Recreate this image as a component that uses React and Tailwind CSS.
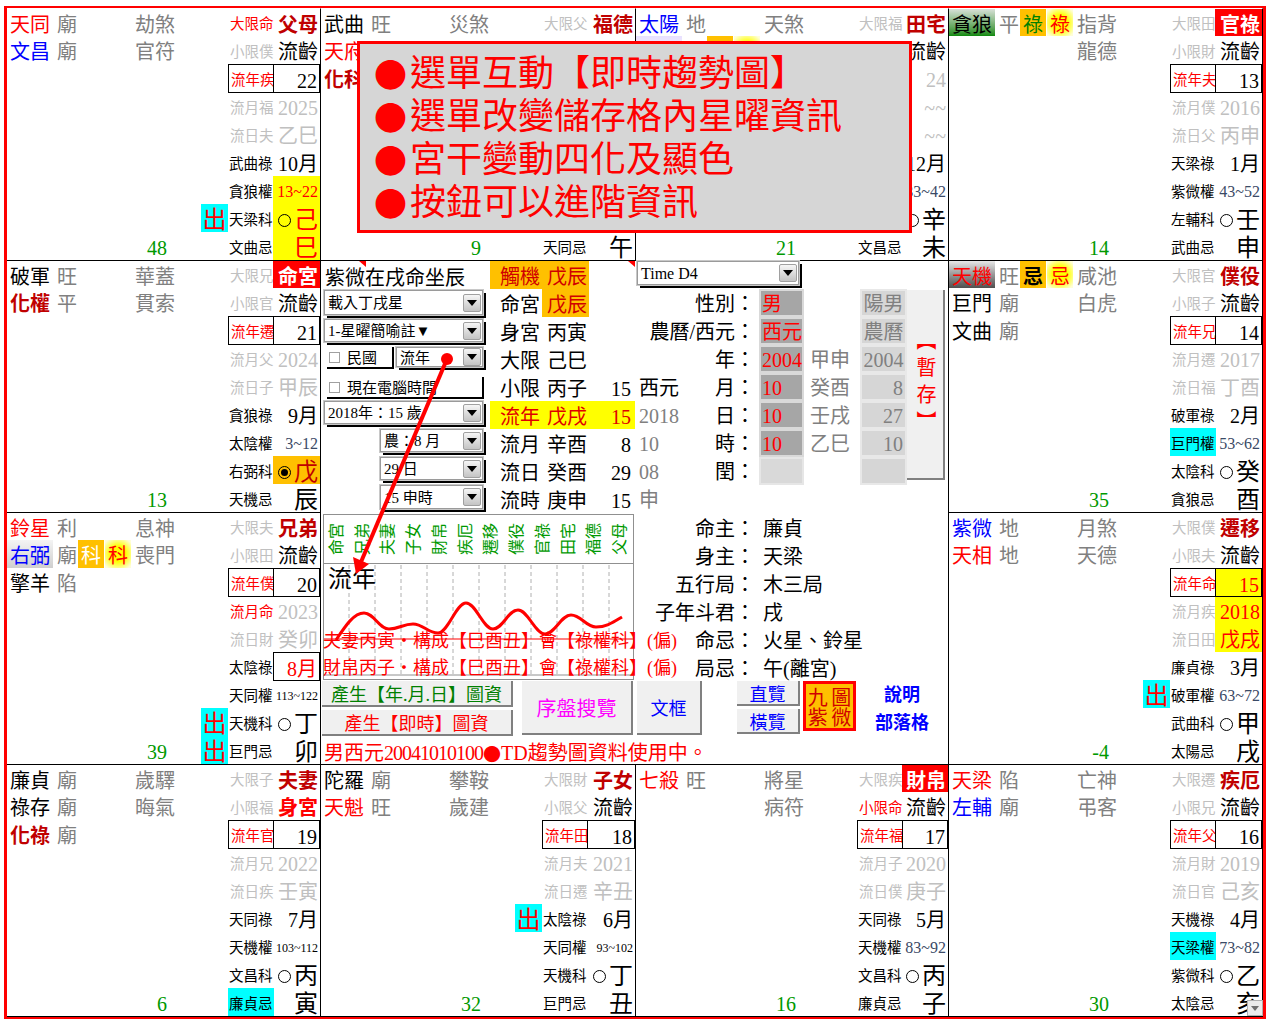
import React from "react";

const RED = "text-[#ff0000]";
const GRAY = "text-[#808080]";
const LIGHT = "text-[#c0c0c0]";
const PAL = "text-[#c00000] font-bold";
const PAL_ON = "text-white font-bold bg-[#ff0000]";
const LIM = "text-[16px] text-[#3a4a66]";
const TINY = "text-[12px] text-black";
const STEM_ON_YELLOW = "text-[24px] text-[#ff0000] bg-[#ffff00]";
const HUA_O = "bg-[#ffc000]";
const HUA_Y = "bg-[radial-gradient(circle,#ffff00_40%,#ffffd8_90%)]";
const CJK = "font-['Noto_Sans_CJK_TC',sans-serif]";

const cells = [
  {
    stars: [
      { n: "天同", c: RED, b: "廟", m: "劫煞" },
      { n: "文昌", c: "text-[#0000ff]", b: "廟", m: "官符" },
    ],
    num: "48", chu: [7],
    da: "大限命", daC: RED, pal: "父母", xiao: "小限僕",
    nian: "流年疾", age: "22", yue: "流月福", yr: "2025", ri: "流日夫", gz: "乙巳",
    lu: "武曲祿", mon: "10月", quan: "貪狼權", lim: "13~22", limC: "text-[16px] text-[#ff0000] bg-[#ffff00]",
    ke: "天梁科", stem: "己", stemC: STEM_ON_YELLOW, ji: "文曲忌", br: "巳", brC: STEM_ON_YELLOW,
  },
  {
    // rows 2-8 of the right side sit under the note box
    stars: [
      { n: "武曲", c: "text-black", b: "旺", m: "災煞" },
      { n: "天府", c: RED },
      { n: "化科", c: PAL },
    ],
    num: "9",
    da: "大限父", pal: "福德", noBox: true, noCircle: true,
    ji: "天同忌", br: "午",
  },
  {
    stars: [
      { n: "太陽", c: "text-[#0000ff]", b: "地", m: "天煞" },
      {
        nb: "bg-gradient-to-b from-[#e8e0ff] to-white",
        h1: { c: HUA_O }, h2: { c: HUA_Y },
      },
    ],
    num: "21",
    da: "大限福", pal: "田宅", xv: "流齡",
    age: "24", noBox: true, ageC: `text-[20px] ${LIGHT}`, yr: "~~", gz: "~~",
    mon: "12月", lim: "33~42",
    stem: "辛", ji: "文昌忌", br: "未",
  },
  {
    stars: [
      {
        n: "貪狼", c: "text-black", nb: "bg-gradient-to-b from-[#d8e0d8] to-[#078a07]", b: "平",
        h1: { t: "祿", c: `text-[#008000] ${HUA_O}` }, h2: { t: "祿", c: `${RED} ${HUA_Y}` }, m: "指背",
      },
      { m: "龍德" },
    ],
    num: "14",
    da: "大限田", pal: "官祿", palC: PAL_ON, xiao: "小限財",
    nian: "流年夫", age: "13", yue: "流月僕", yr: "2016", ri: "流日父", gz: "丙申",
    lu: "天梁祿", mon: "1月", quan: "紫微權", lim: "43~52",
    ke: "左輔科", stem: "壬", ji: "武曲忌", br: "申",
  },
];

const leftMid = {
  stars: [
    { n: "破軍", c: "text-black", b: "旺", m: "華蓋" },
    { n: "化權", c: PAL, b: "平", m: "貫索" },
  ],
  num: "13",
  da: "大限兄", pal: "命宮", palC: PAL_ON, xiao: "小限官",
  nian: "流年遷", age: "21", yue: "流月父", yr: "2024", ri: "流日子", gz: "甲辰",
  lu: "貪狼祿", mon: "9月", quan: "太陰權", lim: "3~12",
  ke: "右弼科", stem: "戊", stemC: "text-[24px] text-[#c00000] bg-[#ffc000]", dot: true, ji: "天機忌", br: "辰",
};

const rightMid = {
  stars: [
    {
      n: "天機", c: RED, nb: "bg-gradient-to-b from-[#e8e8e8] to-[#505050]", b: "旺",
      h1: { t: "忌", c: `text-black font-bold ${HUA_O}` }, h2: { t: "忌", c: `${RED} ${HUA_Y}` }, m: "咸池",
    },
    { n: "巨門", c: "text-black", b: "廟", m: "白虎" },
    { n: "文曲", c: "text-black", b: "廟" },
  ],
  num: "35",
  da: "大限官", pal: "僕役", xiao: "小限子",
  nian: "流年兄", age: "14", yue: "流月遷", yr: "2017", ri: "流日福", gz: "丁酉",
  lu: "破軍祿", mon: "2月", quan: "巨門權", quanC: "text-black bg-[#00ffff]", lim: "53~62",
  ke: "太陰科", stem: "癸", ji: "貪狼忌", br: "酉",
};

const leftLow = {
  stars: [
    { n: "鈴星", c: RED, b: "利", m: "息神" },
    {
      n: "右弼", c: "text-[#0000ff]", nb: "bg-gradient-to-b from-[#f4f4f4] to-[#cfcfcf]", b: "廟",
      h1: { t: "科", c: `text-white ${HUA_O}` }, h2: { t: "科", c: `${RED} ${HUA_Y}` }, m: "喪門",
    },
    { n: "擎羊", c: "text-black", b: "陷" },
  ],
  num: "39", chu: [7, 8],
  da: "大限夫", pal: "兄弟", xiao: "小限田",
  nian: "流年僕", age: "20", yue: "流月命", yueC: RED, yr: "2023", ri: "流日財", gz: "癸卯",
  lu: "太陰祿", mon: "8月", monC: `text-[20px] ${RED}`, monBox: true, quan: "天同權", lim: "113~122", limC: TINY,
  ke: "天機科", stem: "丁", ji: "巨門忌", br: "卯",
};

const rightLow = {
  stars: [
    { n: "紫微", c: "text-[#0000ff]", b: "地", m: "月煞" },
    { n: "天相", c: RED, b: "地", m: "天德" },
  ],
  num: "-4", chu: [6],
  da: "大限僕", pal: "遷移", xiao: "小限夫",
  nian: "流年命", age: "15", ageC: "text-[20px] text-[#ff0000] bg-[#ffff00]",
  yue: "流月疾", yr: "2018", yrC: "text-[20px] text-[#ff0000] bg-[#ffff00]",
  ri: "流日田", gz: "戊戌", gzC: "text-[20px] text-[#ff0000] bg-[#ffff00]",
  lu: "廉貞祿", mon: "3月", quan: "破軍權", lim: "63~72",
  ke: "武曲科", stem: "甲", ji: "太陽忌", br: "戌",
};

const bottom = [
  {
    stars: [
      { n: "廉貞", c: "text-black", b: "廟", m: "歲驛" },
      { n: "祿存", c: "text-black", b: "廟", m: "晦氣" },
      { n: "化祿", c: PAL, b: "廟" },
    ],
    num: "6",
    da: "大限子", pal: "夫妻", xiao: "小限福", xv: "身宮", xvC: "text-[20px] text-[#ff0000] font-bold",
    nian: "流年官", age: "19", yue: "流月兄", yr: "2022", ri: "流日疾", gz: "壬寅",
    lu: "天同祿", mon: "7月", quan: "天機權", lim: "103~112", limC: TINY,
    ke: "文昌科", stem: "丙", ji: "廉貞忌", jiC: "text-black bg-[#00ffff]", br: "寅",
  },
  {
    stars: [
      { n: "陀羅", c: "text-black", b: "廟", m: "攀鞍" },
      { n: "天魁", c: RED, b: "旺", m: "歲建" },
    ],
    num: "32", chu: [5],
    da: "大限財", pal: "子女", xiao: "小限父",
    nian: "流年田", age: "18", yue: "流月夫", yr: "2021", ri: "流日遷", gz: "辛丑",
    lu: "太陰祿", mon: "6月", quan: "天同權", lim: "93~102", limC: TINY,
    ke: "天機科", stem: "丁", ji: "巨門忌", br: "丑",
  },
  {
    stars: [
      { n: "七殺", c: RED, b: "旺", m: "將星" },
      { m: "病符" },
    ],
    num: "16",
    da: "大限疾", pal: "財帛", palC: PAL_ON, xiao: "小限命", xiaoC: RED,
    nian: "流年福", age: "17", yue: "流月子", yr: "2020", ri: "流日僕", gz: "庚子",
    lu: "天同祿", mon: "5月", quan: "天機權", lim: "83~92",
    ke: "文昌科", stem: "丙", ji: "廉貞忌", br: "子",
  },
  {
    stars: [
      { n: "天梁", c: RED, b: "陷", m: "亡神" },
      { n: "左輔", c: "text-[#0000ff]", b: "廟", m: "弔客" },
    ],
    num: "30",
    da: "大限遷", pal: "疾厄", xiao: "小限兄",
    nian: "流年父", age: "16", yue: "流月財", yr: "2019", ri: "流日官", gz: "己亥",
    lu: "天機祿", mon: "4月", quan: "天梁權", quanC: "text-black bg-[#00ffff]", lim: "73~82",
    ke: "紫微科", stem: "乙", ji: "太陰忌", br: "亥",
  },
];

const rowH = (i) => (i === 0 ? "h-[27px]" : "h-[28px]");

function LeftRows({ cell }) {
  const rows = Array.from({ length: 9 });
  return (
    <div className="w-[221px] shrink-0">
      {rows.map((_, i) => {
        const s = cell.stars[i] || {};
        const isLast = i === 8;
        return (
          <div key={i} className={`flex items-stretch ${rowH(i)}`}>
            <div className={`w-[46px] flex items-center pl-[3px] pt-[4px] shrink-0 ${s.c || ""} ${s.nb || ""}`}>{s.n}</div>
            <div className={`ml-1 w-5 flex items-center pt-[4px] shrink-0 ${GRAY}`}>{s.b}</div>
            <div className={`ml-px w-[26px] flex items-center justify-center pt-[4px] shrink-0 ${s.h1 ? s.h1.c : ""}`}>{s.h1 && s.h1.t}</div>
            <div className={`ml-px w-[26px] flex items-center justify-center pt-[4px] shrink-0 ${s.h2 ? s.h2.c : ""}`}>{s.h2 && s.h2.t}</div>
            <div className={`ml-1 w-8 flex items-center pt-[4px] shrink-0 whitespace-nowrap ${isLast ? "justify-end text-[#009900]" : GRAY}`}>
              {isLast ? cell.num : s.m}
            </div>
            <div className="flex-1" />
            {cell.chu && cell.chu.includes(i) && (
              <div className={`w-[27px] flex items-center justify-center pt-[3px] bg-[#00ffff] text-[24px] ${RED}`}>出</div>
            )}
          </div>
        );
      })}
    </div>
  );
}

function Circle({ dot }) {
  return (
    <span className="w-[13px] h-[13px] mr-[3px] rounded-full border border-black flex items-center justify-center shrink-0">
      {dot && <span className="w-[7px] h-[7px] rounded-full bg-black" />}
    </span>
  );
}

function SideRow({ i, label, labelC, value, valueC, box, valueBox, circle, dot }) {
  const boxed = box ? "border border-black relative z-10" : "";
  const h = box || valueBox ? "h-[29px] -mb-px" : rowH(i);
  const inset = labelC.includes("text-black") ? "pl-px" : "pl-[2px]";
  return (
    <div className={`flex ${h} items-stretch`}>
      <div className={`w-[46px] shrink-0 flex items-center ${inset} pt-[4px] text-[14.5px] whitespace-nowrap ${labelC} ${boxed}`}>{label}</div>
      <div
        className={`flex-1 -ml-px flex items-center justify-end pr-[2px] pt-[4px] whitespace-nowrap ${valueC} ${boxed} ${valueBox ? "border border-black relative z-10" : ""}`}
      >
        {circle && <Circle dot={dot} />}
        {value}
      </div>
    </div>
  );
}

function SideRows({ c }) {
  const twenty = "text-[20px]";
  return (
    <div className="flex-1 min-w-0">
      <SideRow i={0} label={c.da} labelC={c.daC || LIGHT} value={c.pal} valueC={c.palC || PAL} />
      <SideRow i={1} label={c.xiao} labelC={c.xiaoC || LIGHT} value={c.xv || (c.xiao ? "流齡" : "")} valueC={c.xvC || `${twenty} text-black`} />
      <SideRow i={2} label={c.nian} labelC={RED} value={c.age} valueC={c.ageC || `${twenty} text-black`} box={!c.noBox} />
      <SideRow i={3} label={c.yue} labelC={c.yueC || LIGHT} value={c.yr} valueC={c.yrC || `${twenty} ${LIGHT}`} />
      <SideRow i={4} label={c.ri} labelC={LIGHT} value={c.gz} valueC={c.gzC || `${twenty} ${LIGHT}`} />
      <SideRow i={5} label={c.lu} labelC="text-black" value={c.mon} valueC={c.monC || `${twenty} text-black`} valueBox={c.monBox} />
      <SideRow i={6} label={c.quan} labelC={c.quanC || "text-black"} value={c.lim} valueC={c.limC || LIM} />
      <SideRow i={7} label={c.ke} labelC="text-black" value={c.stem} valueC={c.stemC || "text-[24px] text-black"} circle={!c.noCircle} dot={c.dot} />
      <SideRow i={8} label={c.ji} labelC={c.jiC || "text-black"} value={c.br} valueC={c.brC || "text-[24px] text-black"} />
    </div>
  );
}

function Cell({ cell, top }) {
  return (
    <div className={`flex border-r border-black border-t ${top ? "border-t-white" : "border-t-black"}`}>
      <LeftRows cell={cell} />
      <SideRows c={cell} />
    </div>
  );
}

function Arrow() {
  return (
    <span className="w-[18px] h-[18px] shrink-0 flex items-center justify-center rounded-[2px] border border-[#a0a0a0] bg-gradient-to-b from-[#f6f6f6] to-[#c4c4c4]">
      <svg width="10" height="6" viewBox="0 0 10 6">
        <polygon points="0,0 10,0 5,6" fill="#000" />
      </svg>
    </span>
  );
}

function FakeSelect({ text, className, textSize = "text-[15px]" }) {
  return (
    <div className={`flex items-center justify-between pl-[3px] pr-[1px] bg-white border border-[#9a9a9a] outline outline-1 outline-[#c8c8c8] shadow-[3px_3px_0_#000] ${textSize} ${className}`}>
      <span className="whitespace-nowrap pt-[2px]">{text}</span>
      <Arrow />
    </div>
  );
}

function Check({ text, className }) {
  return (
    <div className={`flex items-center pl-[2px] text-[15px] border-r-2 border-b-2 border-black ${className}`}>
      <span className="w-[11px] h-[11px] border border-[#a0a0a0] bg-white mr-[7px] shrink-0" />
      <span className="whitespace-nowrap pt-[2px]">{text}</span>
    </div>
  );
}

function ControlColumn() {
  return (
    <div className="w-[169px] shrink-0 pl-[3px]">
      <div className="h-[28px] flex items-center pl-px pt-[5px]">紫微在戌命坐辰</div>
      <div className="h-[28px] pt-px"><FakeSelect text="載入丁戌星" className="w-[159px] h-[25px]" /></div>
      <div className="h-[28px] pt-[2px]"><FakeSelect text="1-星曜簡喻註▼" className="w-[159px] h-[23px]" /></div>
      <div className="h-[28px] pt-[2px] flex">
        <Check text="民國" className="ml-[3px] w-[67px] h-[22px]" />
        <FakeSelect text="流年" className="ml-[2px] w-[87px] h-[20px]" />
      </div>
      <div className="h-[28px] pt-[4px]"><Check text="現在電腦時間" className="ml-[3px] w-[157px] h-[22px]" /></div>
      <div className="h-[28px]"><FakeSelect text="2018年：15 歲" className="w-[159px] h-[23px]" /></div>
      <div className="h-[28px]"><FakeSelect text="農：8 月" className="ml-[56px] w-[103px] h-[23px]" /></div>
      <div className="h-[28px]"><FakeSelect text="29 日" className="ml-[56px] w-[103px] h-[23px]" /></div>
      <div className="h-[28px]"><FakeSelect text="15 申時" className="ml-[56px] w-[103px] h-[24px]" /></div>
    </div>
  );
}

const timeRows = [
  { a: "觸機", b: "戊辰", row: "bg-[#ffc000] w-[99px] text-[#d00000]" },
  { a: "命宮", b: "戊辰", bc: "bg-[#ffc000] text-[#d00000]" },
  { a: "身宮", b: "丙寅" },
  { a: "大限", b: "己巳" },
  { a: "小限", b: "丙子", c: "15" },
  { a: "流年", b: "戊戌", c: "15", row: "bg-[#ffff00] text-[#e00000]" },
  { a: "流月", b: "辛酉", c: "8" },
  { a: "流日", b: "癸酉", c: "29" },
  { a: "流時", b: "庚申", c: "15" },
];

function TimeTable() {
  return (
    <div className="w-[145px] shrink-0">
      {timeRows.map((r) => (
        <div key={r.a} className={`h-[28px] flex items-stretch ${r.row || "text-black"}`}>
          <div className="w-[52px] flex items-center pl-[10px] pt-[4px] shrink-0">{r.a}</div>
          <div className={`w-[47px] flex items-center pl-[5px] pt-[4px] shrink-0 ${r.bc || ""}`}>{r.b}</div>
          {r.c && <div className="w-[42px] flex items-center justify-end pt-[4px]">{r.c}</div>}
        </div>
      ))}
    </div>
  );
}

const dateRows = [
  { label: "性別", v: "男", gz: "", w: "陽男", alt: true },
  { label: "農曆/西元", v: "西元", gz: "", w: "農曆", alt: true },
  { label: "年", v: "2004", gz: "甲申", w: "2004", alt: true },
  { label: "月", v: "10", gz: "癸酉", w: "8", ex: "西元", exC: "text-black" },
  { label: "日", v: "10", gz: "壬戌", w: "27", ex: "2018" },
  { label: "時", v: "10", gz: "乙巳", w: "10", ex: "10" },
  { label: "閏", v: "", gz: "", w: "", ex: "08" },
];

function DatePanel() {
  return (
    <div className="flex-1 flex">
      <div className="w-[270px] shrink-0">
        <div className="h-[28px]">
          <FakeSelect text="Time D4" className="ml-[2px] w-[162px] h-[24px]" textSize="text-[16px]" />
        </div>
        {dateRows.map((r) => (
          <div key={r.label} className="h-[28px] flex items-stretch">
            <div className={`w-[45px] flex items-center pl-[4px] pt-[2px] shrink-0 ${r.exC || GRAY}`}>{r.ex}</div>
            <div className="w-[55px] shrink-0 flex items-center justify-end pt-[2px] whitespace-nowrap">{r.label}</div>
            <div className="w-[20px] flex items-center justify-center pt-[2px] shrink-0">：</div>
            <div className={`ml-[4px] w-[45px] flex items-center pl-px pt-[2px] border-2 shrink-0 whitespace-nowrap ${r.v ? "bg-[#a6a6a6] border-[#d9d9d9]" : "bg-[#d9d9d9] border-[#e6e6e6]"} ${RED}`}>{r.v}</div>
            <div className={`ml-[6px] w-[42px] flex items-center pt-[2px] shrink-0 ${GRAY}`}>{r.gz}</div>
            <div className={`ml-[8px] w-[47px] flex items-center px-[2px] pt-[2px] border-2 border-[#e8e8e8] bg-[#d6d6d6] shrink-0 whitespace-nowrap ${GRAY} ${r.alt ? "justify-center" : "justify-end"}`}>{r.w}</div>
          </div>
        ))}
        <div className={`h-[28px] flex items-center pl-[4px] pt-[2px] ${GRAY}`}>申</div>
      </div>
      <div className="ml-[2px] mt-[29px] w-[38px] h-[190px] flex items-center justify-center bg-[#f0f0f0] border-r-2 border-b-2 border-[#808080]">
        <span className={`[writing-mode:vertical-rl] tracking-[7px] ${RED}`}>【暫存】</span>
      </div>
    </div>
  );
}

const chartLabels = ["命宮", "兄弟", "夫妻", "子女", "財帛", "疾厄", "遷移", "僕役", "官祿", "田宅", "福德", "父母"];
const gridXs = [25, 51, 77, 103, 129, 155, 181, 207, 233, 259, 285];

function TrendChart() {
  return (
    <div className="relative ml-[2px] mt-px w-[311px] h-[166px] border border-[#909090]">
      <div className="h-[49px] grid grid-cols-12 border-b border-[#909090]">
        {chartLabels.map((l) => (
          <div key={l} className="flex items-center justify-center">
            <span className="-rotate-90 whitespace-nowrap text-[16px] text-[#009900]">{l}</span>
          </div>
        ))}
      </div>
      <svg className="absolute left-0 top-0 w-[309px] h-[164px]" viewBox="0 0 309 164">
        {gridXs.map((x) => (
          <line key={x} x1={x} y1="50" x2={x} y2="160" stroke="#b0b0b0" strokeDasharray="4 3" />
        ))}
        <line x1="0" y1="124" x2="309" y2="124" stroke="#ff0000" strokeWidth="1" />
        <line x1="0" y1="160" x2="309" y2="160" stroke="#909090" strokeWidth="1" />
        <path
          d="M12 125 C22 110 30 98 40 98 S55 114 65 114 S79 109 89 109 S104 118 114 118 S132 88 142 88 S159 114 169 114 S184 95 194 95 S211 119 221 119 S237 100 247 100 S262 112 272 112 S288 108 298 102"
          fill="none"
          stroke="#ff0000"
          strokeWidth="3"
        />
      </svg>
      <div className="absolute left-[4px] top-[49px] text-[24px] leading-[30px]">流年</div>
      <div className={`absolute left-[-1px] top-[112px] text-[18px] leading-[28px] whitespace-nowrap ${RED}`}>夫妻丙寅・構成【巳酉丑】會【祿權科】(偏)</div>
      <div className={`absolute left-[-1px] top-[140px] text-[18px] leading-[26px] whitespace-nowrap ${RED}`}>財帛丙子・構成【巳酉丑】會【祿權科】(偏)</div>
    </div>
  );
}

const infoRows = [
  ["命主", "廉貞"],
  ["身主", "天梁"],
  ["五行局", "木三局"],
  ["子年斗君", "戌"],
  ["命忌", "火星、鈴星"],
  ["局忌", "午(離宮)"],
];

function InfoRows() {
  return (
    <div className="flex-1">
      {infoRows.map(([k, v]) => (
        <div key={k} className="h-[28px] flex items-center pt-[4px]">
          <div className="w-[100px] text-right whitespace-nowrap shrink-0">{k}</div>
          <div className="w-[20px] text-center shrink-0">：</div>
          <div className="ml-[8px] whitespace-nowrap">{v}</div>
        </div>
      ))}
    </div>
  );
}

const btn = "flex items-center justify-center pt-[4px] bg-[#f0f0f0] border-r-2 border-b-2 border-[#808080] whitespace-nowrap";

function ButtonRow() {
  return (
    <div className="h-[57px] flex items-start pt-px">
      <div className="ml-px w-[191px] shrink-0 flex flex-col gap-[3px]">
        <div className={`${btn} h-[26px] text-[18px] text-[#008000]`}>產生【年.月.日】圖資</div>
        <div className={`${btn} h-[26px] text-[18px] ${RED}`}>產生【即時】圖資</div>
      </div>
      <div className={`${btn} ml-[9px] w-[111px] h-[54px] shrink-0 text-[#ff00ff]`}>序盤搜覽</div>
      <div className={`${btn} ml-[4px] w-[65px] h-[54px] shrink-0 text-[18px] text-[#0000ff]`}>文框</div>
      <div className="ml-[35px] w-[63px] shrink-0 flex flex-col gap-[3px]">
        <div className={`${btn} h-[25px] text-[18px] text-[#0000ff]`}>直覽</div>
        <div className={`${btn} h-[25px] text-[18px] text-[#0000ff]`}>橫覽</div>
      </div>
      <div className="ml-[3px] w-[53px] h-[50px] pt-[4px] shrink-0 grid grid-cols-2 place-items-center bg-[#ffc000] border-[3px] border-[#ff0000] text-[20px] leading-[20px] text-[#d00000]">
        <span>九</span><span>圖</span><span>紫</span><span>微</span>
      </div>
      <div className="flex-1 flex flex-col items-center text-[18px] font-bold leading-[28px] text-[#0000ff]">
        <span>說明</span>
        <span>部落格</span>
      </div>
    </div>
  );
}

function Center() {
  return (
    <div className="relative col-span-2 row-span-2 border-t border-black border-r">
      <div className="flex h-[252px]">
        <ControlColumn />
        <TimeTable />
        <DatePanel />
      </div>
      <div className="h-[251px]">
        <div className="flex h-[167px]">
          <div className="w-[314px] shrink-0"><TrendChart /></div>
          <InfoRows />
        </div>
        <ButtonRow />
        <div className={`h-[27px] flex items-center pl-[3px] pt-[4px] whitespace-nowrap ${RED}`}>
          男西元<span className="tracking-[-1px]">20041010100</span><span className={`${CJK} text-[18px]`}>●</span>TD趨勢圖資料使用中。
        </div>
      </div>
      <div className="absolute left-[38px] top-0 w-[7px] h-[6px] bg-[#ff0000] [clip-path:polygon(0_0,100%_0,100%_100%)]" />
      <div className="absolute left-[307px] top-0 w-[7px] h-[6px] bg-[#ff0000] [clip-path:polygon(0_0,100%_0,100%_100%)]" />
    </div>
  );
}

const notes = ["選單互動【即時趨勢圖】", "選單改變儲存格內星曜資訊", "宮干變動四化及顯色", "按鈕可以進階資訊"];

export default function App() {
  return (
    <div className="relative w-[1271px] h-[1024px] overflow-hidden bg-white text-black text-[20px] leading-none font-['Liberation_Serif','Noto_Sans_CJK_TC',serif]">
      <div className="pt-[6px] pl-[4px]">
        <div className="w-[1262px] border-t-2 border-b-2 border-l-[3px] border-r-[3px] border-[#ff0000]">
          <div className="grid grid-cols-[314px_315px_313px_314px] grid-rows-[repeat(4,252px)] border-b border-black">
            {cells.map((c, i) => (
              <Cell key={i} cell={c} top />
            ))}
            <Cell cell={leftMid} />
            <Center />
            <Cell cell={rightMid} />
            <Cell cell={leftLow} />
            <Cell cell={rightLow} />
            {bottom.map((c, i) => (
              <Cell key={i} cell={c} />
            ))}
          </div>
        </div>
      </div>

      {/* overlay note */}
      <div className="absolute left-[357px] top-[41px] w-[555px] h-[192px] pl-[14px] pt-[8px] bg-[#d6d6d6] border-[3px] border-[#ff0000] z-20">
        {notes.map((n) => (
          <div key={n} className="h-[43px] flex items-center text-[36px] text-[#ff0000] whitespace-nowrap">
            <span className={`w-[36px] shrink-0 text-[33px] ${CJK}`}>●</span>{n}
          </div>
        ))}
      </div>

      {/* red pointer */}
      <svg className="absolute left-0 top-0 w-[1271px] h-[1024px] z-30 pointer-events-none" viewBox="0 0 1271 1024">
        <circle cx="447" cy="359" r="6" fill="#ff0000" />
        <line x1="447" y1="359" x2="361" y2="562" stroke="#ff0000" strokeWidth="4" />
        <polygon points="356,574 353,557 369,564" fill="#ff0000" />
      </svg>

      {/* corner scroll arrow */}
      <div className="absolute left-[1247px] top-[1000px] w-[16px] h-[16px] flex items-center justify-center bg-[#ececec] border border-[#b0b0b0] z-20">
        <svg width="8" height="5" viewBox="0 0 8 5">
          <polygon points="0,0 8,0 4,5" fill="#707070" />
        </svg>
      </div>
    </div>
  );
}
